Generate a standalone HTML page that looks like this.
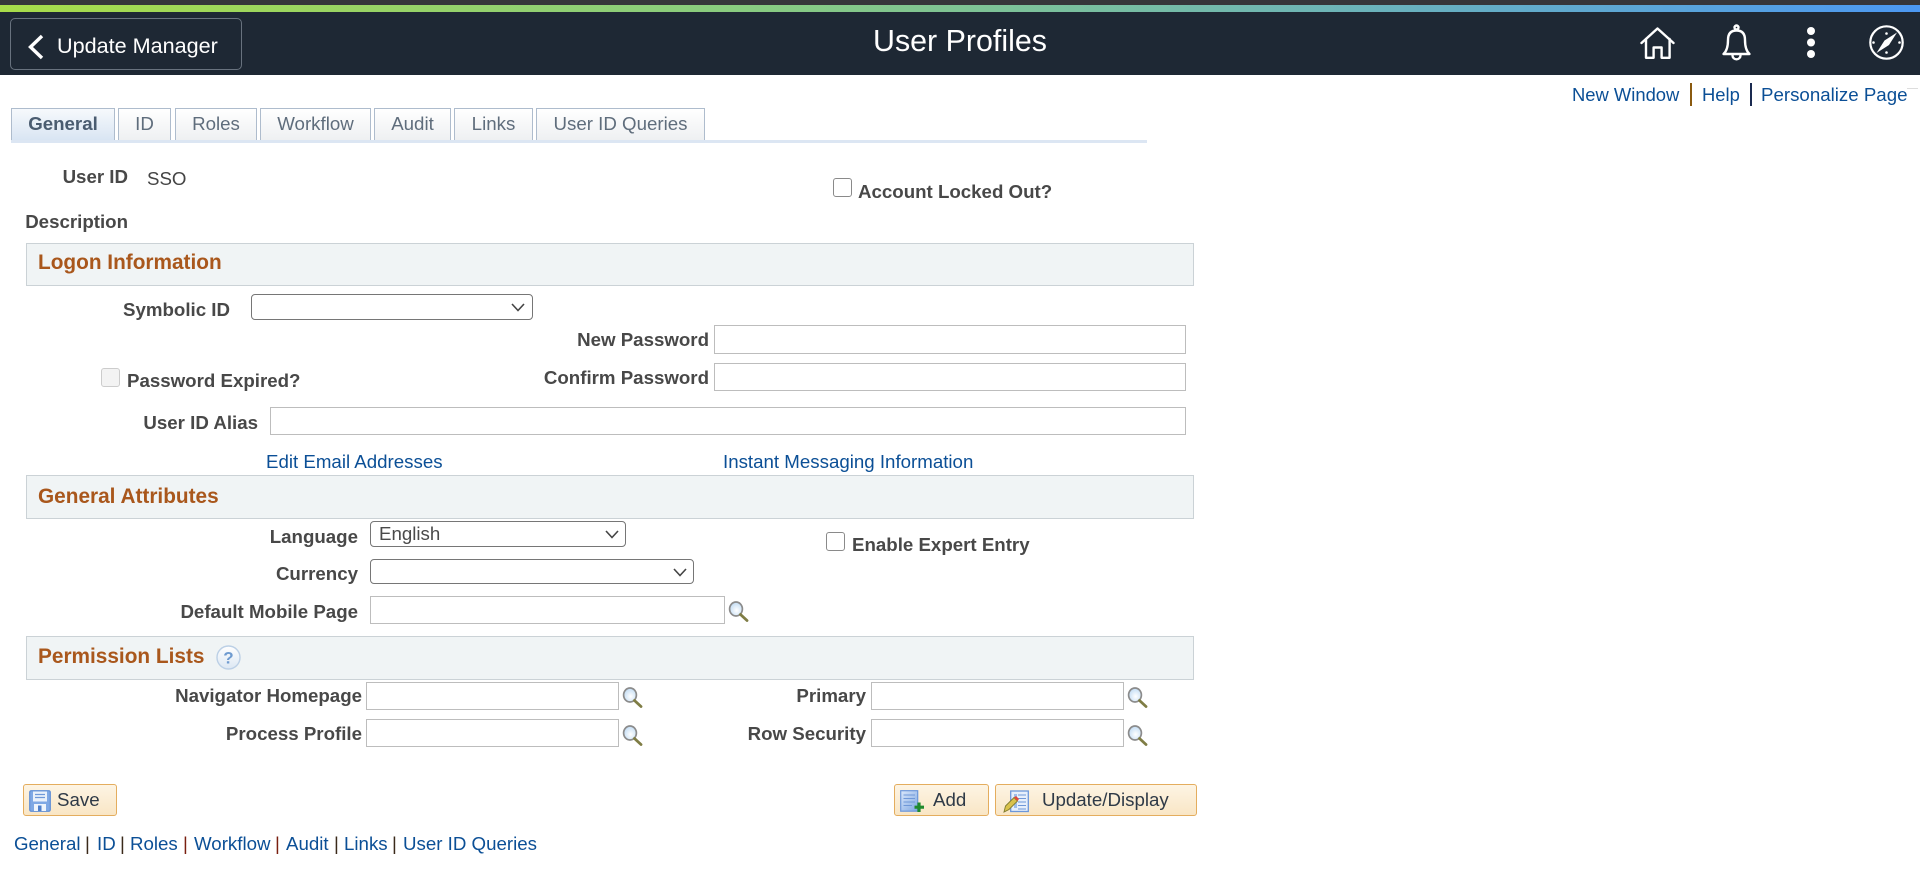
<!DOCTYPE html>
<html lang="en">
<head>
<meta charset="utf-8">
<title>User Profiles</title>
<style>
html,body{margin:0;padding:0;background:#fff;width:1920px;height:878px;overflow:hidden}
body{position:relative;font-family:"Liberation Sans",Arial,sans-serif;font-size:18.7px;color:#444}
.a,.l,.t,.k,.i,.s,.c,.h,.tab,.b,.sv{position:absolute;box-sizing:border-box}
.l,.t,.k{line-height:20px;height:20px;white-space:nowrap}
.l{font-weight:bold;color:#484848;text-align:right;left:0;margin-top:-1px}
.k{color:#0b4f96}
.i{background:#fff;border:1.5px solid #bdbdbd}
.s{background:#fff;border:1px solid #767676;border-radius:4px}
.s svg{position:absolute;top:8px}
.c{width:19px;height:19px;background:#fff;border:1.6px solid #8a8a8a;border-radius:3px}
.h{left:26px;width:1168px;background:#f0f4f5;border:1.5px solid #cbd2d6}
.h span{position:absolute;left:11px;font-weight:bold;font-size:20.8px;color:#a9571c;line-height:22px;white-space:nowrap}
.tab{top:108px;height:32px;text-align:center;line-height:30px;color:#5f6d7c;border:1.3px solid #aebccd;border-bottom:0;background:linear-gradient(#fff,#eef0f2)}
.tab.on{font-weight:bold;color:#4a5c70;background:linear-gradient(#f6f9fc,#d9e5f3)}
.b{top:784px;height:32px;border:1.5px solid #e4ad5e;border-radius:3px;background:linear-gradient(#fdf4e4,#f9e6c5)}
.t.bt{color:#2f3a47}
.sep{position:absolute;width:2px;background:#3a2a1a}
.sv{display:block}
</style>
</head>
<body>
<div class="a" style="left:0;top:0;width:1920px;height:5px;background:#36363a"></div>
<div class="a" style="left:0;top:5px;width:1920px;height:7px;background:linear-gradient(90deg,#a8dc4a 0%,#88cb82 40%,#6fb6b4 68%,#4c98f2 100%)"></div>
<div class="a" style="left:0;top:12px;width:1920px;height:63px;background:#1e2834"></div>

<div class="a" style="left:10px;top:18px;width:232px;height:52px;border:1.2px solid #68727e;border-radius:5px"></div>
<svg class="sv" style="left:0;top:0" width="1920" height="80" viewBox="0 0 1920 80">
<path d="M42 36 L30.5 47 L42 58" fill="none" stroke="#fff" stroke-width="3.4"/>
<g fill="none" stroke="#fff" stroke-width="2.4" stroke-linejoin="round" stroke-linecap="round">
<path d="M1641.5 43 L1657.5 28.5 L1673.5 43"/>
<path d="M1646 39 V57.8 H1653.6 V47.5 H1661.6 V57.8 H1669.6 V39"/>
<path d="M1723.5 54 Q1728 50 1728 40 Q1728 30.5 1736.5 30.5 Q1745 30.5 1745 40 Q1745 50 1749.5 54 Z"/>
<circle cx="1736.5" cy="27.5" r="2"/>
<path d="M1732.5 55.5 a4 3.8 0 0 0 8 0"/>
<circle cx="1886.5" cy="42.5" r="16.2" stroke-width="2.2"/>
</g>
<circle cx="1811" cy="31" r="4" fill="#fff"/><circle cx="1811" cy="42.5" r="4" fill="#fff"/><circle cx="1811" cy="54" r="4" fill="#fff"/>
<path d="M1897 32.5 L1889 45 L1876.5 53 L1884.5 40.5 Z" fill="#fff"/>
<g fill="#fff"><circle cx="1886.5" cy="33.5" r="1.3"/><circle cx="1886.5" cy="52.5" r="1.3"/><circle cx="1873.5" cy="42.5" r="1.3"/><circle cx="1899.5" cy="42.5" r="1.3"/></g>
</svg>
<div class="t" style="left:57px;top:34px;font-size:21.6px;line-height:24px;height:24px;color:#fff">Update Manager</div>
<div class="t" style="left:873px;top:24px;font-size:30.4px;line-height:34px;height:34px;color:#fff">User Profiles</div>

<div class="k" style="left:1572px;top:85px;font-size:18.4px">New Window</div>
<div class="sep" style="left:1690px;top:83px;height:23px;background:#8a5a10"></div>
<div class="k" style="left:1702px;top:85px;font-size:18.4px">Help</div>
<div class="sep" style="left:1750px;top:83px;height:23px;background:#1a2a50"></div>
<div class="k" style="left:1761px;top:85px">Personalize Page</div>
<div class="a" style="left:1907px;top:88px;width:11px;height:1px;background:#ddd"></div>

<div class="tab on" style="left:11px;width:104px">General</div>
<div class="tab" style="left:118px;width:53px">ID</div>
<div class="tab" style="left:175px;width:82px">Roles</div>
<div class="tab" style="left:260px;width:111px">Workflow</div>
<div class="tab" style="left:374px;width:77px">Audit</div>
<div class="tab" style="left:454px;width:79px">Links</div>
<div class="tab" style="left:536px;width:169px">User ID Queries</div>
<div class="a" style="left:11px;top:140px;width:1136px;height:3px;background:#dce6f3"></div>

<div class="l" style="width:128px;top:167px;margin-top:0">User ID</div>
<div class="t" style="left:147px;top:169px">SSO</div>
<div class="c" style="left:833px;top:178px"></div>
<div class="t" style="left:858px;top:182px;font-weight:bold;color:#484848">Account Locked Out?</div>
<div class="l" style="width:128px;top:212px;margin-top:0">Description</div>

<div class="h" style="top:243px;height:43px"><span style="top:8px">Logon Information</span></div>
<div class="l" style="width:230px;top:301px">Symbolic ID</div>
<div class="s" style="left:251px;top:294px;width:282px;height:26px"><svg style="left:259px" width="14" height="9" viewBox="0 0 14 9"><path d="M1 1 L7 7.5 L13 1" fill="none" stroke="#444" stroke-width="1.6"/></svg></div>
<div class="l" style="width:709px;top:331px">New Password</div>
<div class="i" style="left:714px;top:325px;width:472px;height:29px"></div>
<div class="l" style="width:709px;top:369px">Confirm Password</div>
<div class="i" style="left:714px;top:363px;width:472px;height:28px"></div>
<div class="c" style="left:101px;top:368px;background:#f3f3f3;border-color:#ccc"></div>
<div class="t" style="left:127px;top:371px;font-weight:bold;color:#484848">Password Expired?</div>
<div class="l" style="width:258px;top:414px">User ID Alias</div>
<div class="i" style="left:270px;top:407px;width:916px;height:28px"></div>
<div class="k" style="left:266px;top:452px">Edit Email Addresses</div>
<div class="k" style="left:723px;top:452px">Instant Messaging Information</div>

<div class="h" style="top:475px;height:44px"><span style="top:10px">General Attributes</span></div>
<div class="l" style="width:358px;top:528px">Language</div>
<div class="s" style="left:370px;top:521px;width:256px;height:26px"><svg style="left:234px" width="14" height="9" viewBox="0 0 14 9"><path d="M1 1 L7 7.5 L13 1" fill="none" stroke="#444" stroke-width="1.6"/></svg></div>
<div class="t" style="left:379px;top:524px;color:#4a4a4a">English</div>
<div class="c" style="left:826px;top:532px"></div>
<div class="t" style="left:852px;top:535px;font-weight:bold;color:#484848">Enable Expert Entry</div>
<div class="l" style="width:358px;top:565px">Currency</div>
<div class="s" style="left:370px;top:559px;width:324px;height:25px"><svg style="left:302px" width="14" height="9" viewBox="0 0 14 9"><path d="M1 1 L7 7.5 L13 1" fill="none" stroke="#444" stroke-width="1.6"/></svg></div>
<div class="l" style="width:358px;top:603px">Default Mobile Page</div>
<div class="i" style="left:370px;top:596px;width:355px;height:28px"></div>

<div class="h" style="top:636px;height:44px"><span style="top:9px">Permission Lists</span></div>
<svg class="sv" style="left:216px;top:645px" width="25" height="25" viewBox="0 0 25 25">
<defs><linearGradient id="hg" x1="0" y1="0" x2="0" y2="1"><stop offset="0" stop-color="#fff"/><stop offset="1" stop-color="#dce7f3"/></linearGradient></defs>
<circle cx="12.5" cy="12.5" r="11.5" fill="url(#hg)" stroke="#bcd0e6" stroke-width="1.4"/>
<text x="12.5" y="18.5" text-anchor="middle" font-family="Liberation Sans,Arial,sans-serif" font-weight="bold" font-size="17" fill="#6f9bd0">?</text>
</svg>

<div class="l" style="width:362px;top:687px">Navigator Homepage</div>
<div class="i" style="left:366px;top:682px;width:253px;height:28px"></div>
<div class="l" style="width:362px;top:725px">Process Profile</div>
<div class="i" style="left:366px;top:719px;width:253px;height:28px"></div>
<div class="l" style="width:866px;top:687px">Primary</div>
<div class="i" style="left:871px;top:682px;width:253px;height:28px"></div>
<div class="l" style="width:866px;top:725px">Row Security</div>
<div class="i" style="left:871px;top:719px;width:253px;height:28px"></div>

<svg class="sv" style="left:0;top:0" width="1200" height="830" viewBox="0 0 1200 830">
<defs>
<radialGradient id="lens" cx=".55" cy=".6" r=".7"><stop offset="0" stop-color="#fff"/><stop offset="1" stop-color="#b7d6f2"/></radialGradient>
<g id="mag">
<ellipse cx="8" cy="8" rx="6.4" ry="7" fill="url(#lens)" stroke="#8b8b8b" stroke-width="1.7"/>
<path d="M12.5 13.5 L19 19.5" stroke="#7f7d45" stroke-width="2.8" stroke-linecap="round"/>
</g>
<linearGradient id="doc" x1="0" y1="0" x2="1" y2="1"><stop offset="0" stop-color="#dbe8fb"/><stop offset="1" stop-color="#7ea7e2"/></linearGradient>
</defs>
<use href="#mag" x="728" y="601"/>
<use href="#mag" x="622" y="687"/>
<use href="#mag" x="622" y="725"/>
<use href="#mag" x="1127" y="687"/>
<use href="#mag" x="1127" y="725"/>
</svg>

<div class="b" style="left:23px;width:94px"></div>
<svg class="sv" style="left:29px;top:790px" width="22" height="22" viewBox="0 0 22 22">
<rect x=".7" y=".7" width="20.6" height="20.6" rx="1.5" fill="#7fa8e4" stroke="#5f8ed6" stroke-width="1.2"/>
<rect x="4" y="1.5" width="14" height="10" fill="#eaf1fb"/>
<path d="M6 4.5 H16 M6 7.5 H16" stroke="#6f98d8" stroke-width="1.3"/>
<rect x="5" y="14" width="12" height="7" fill="#eef4fc"/>
<rect x="9" y="15.5" width="3.5" height="5.5" fill="#4f80cc"/>
</svg>
<div class="t bt" style="left:57px;top:790px">Save</div>

<div class="b" style="left:894px;width:95px"></div>
<svg class="sv" style="left:900px;top:790px" width="25" height="23" viewBox="0 0 25 23">
<rect x=".7" y=".7" width="17" height="20.5" fill="url(#doc)" stroke="#6b97db" stroke-width="1.2"/>
<path d="M3.5 5 H15 M3.5 8.5 H15 M3.5 12 H15 M3.5 15.5 H12" stroke="#6f98d8" stroke-width="1.1"/>
<path d="M19 12.5 V22 M14.5 17.2 H24" stroke="#1f8a2e" stroke-width="3.2"/>
</svg>
<div class="t bt" style="left:933px;top:790px">Add</div>

<div class="b" style="left:995px;width:202px"></div>
<svg class="sv" style="left:1003px;top:790px" width="26" height="23" viewBox="0 0 26 23">
<rect x="7.7" y="1" width="17.6" height="20.5" fill="#e6effb" stroke="#6b97db" stroke-width="1.3"/>
<path d="M15 5 H23 M15 8.5 H23 M15 12 H23 M15 15.5 H23 M15 19 H23" stroke="#6f98d8" stroke-width="1.1"/>
<rect x="11" y="4" width="3" height="14" fill="#9dbdea"/>
<path d="M1 22 L2.5 16 L11 7.5 L14.5 11 L6 19.5 Z" fill="#d9c24c" stroke="#7f7a30" stroke-width=".9"/>
<path d="M11 7.5 L14.5 11 L16 9 L13 6 Z" fill="#e2483a"/>
</svg>
<div class="t bt" style="left:1042px;top:790px">Update/Display</div>

<div class="k" style="left:14px;top:834px">General</div>
<div class="t" style="left:85px;top:834px;color:#3a2a1a">|</div>
<div class="k" style="left:97px;top:834px">ID</div>
<div class="t" style="left:120px;top:834px;color:#3a2a1a">|</div>
<div class="k" style="left:130px;top:834px">Roles</div>
<div class="t" style="left:183px;top:834px;color:#7a1f10">|</div>
<div class="k" style="left:194px;top:834px">Workflow</div>
<div class="t" style="left:275px;top:834px;color:#7a1f10">|</div>
<div class="k" style="left:286px;top:834px">Audit</div>
<div class="t" style="left:334px;top:834px;color:#3a2a1a">|</div>
<div class="k" style="left:344px;top:834px">Links</div>
<div class="t" style="left:392px;top:834px;color:#3a2a1a">|</div>
<div class="k" style="left:403px;top:834px">User ID Queries</div>
</body>
</html>
